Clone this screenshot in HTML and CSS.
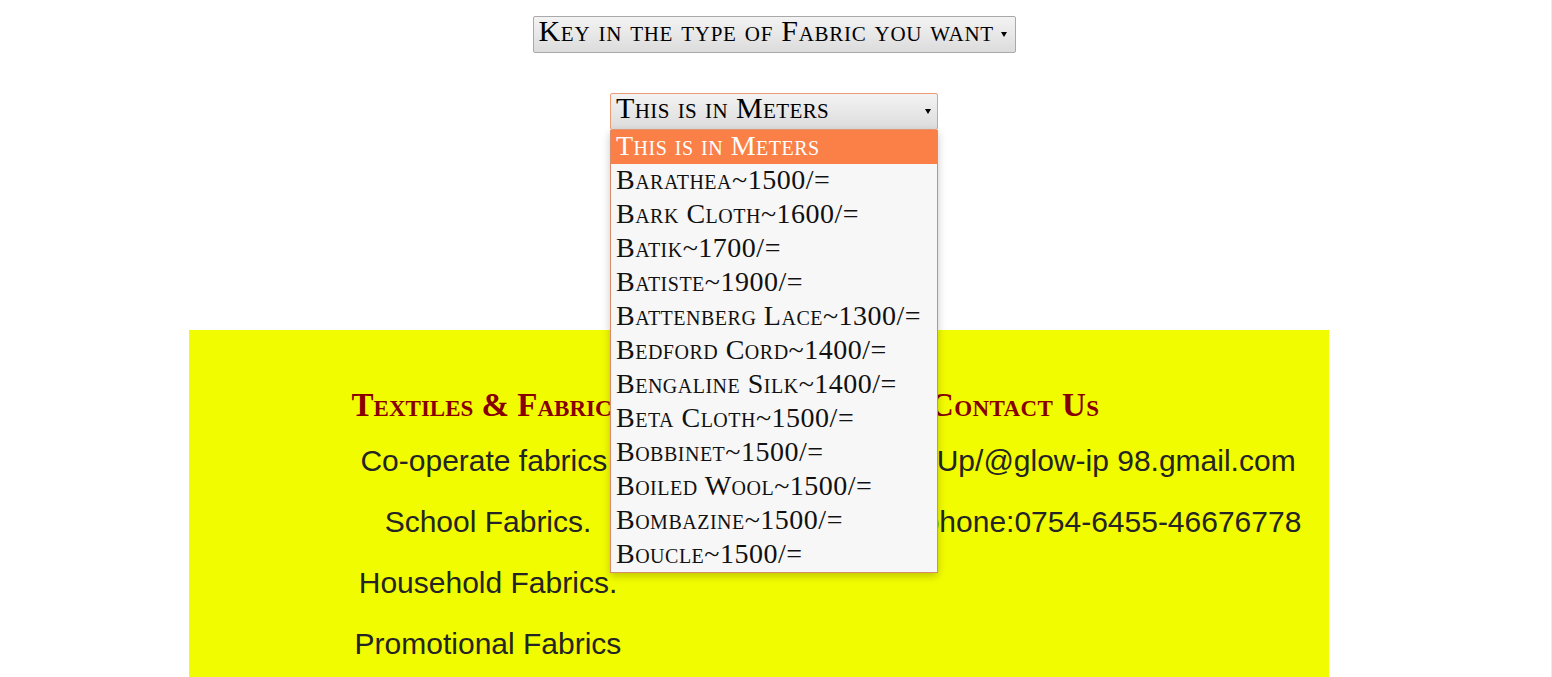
FILE: index.html
```html
<!DOCTYPE html>
<html lang="en">
<head>
<meta charset="utf-8">
<title>Fabrics</title>
<link rel="stylesheet" href="styles.css">
</head>
<body>
<div class="page">
  <div class="controls">
    <div class="select select-fabric">
      <span class="select-label">Key in the type of Fabric you want</span>
      <span class="caret"></span>
    </div>
    <div class="picker">
      <div class="select select-meters">
        <span class="select-label">This is in Meters</span>
        <span class="caret"></span>
      </div>
      <ul class="options">
        <li class="option is-active">This is in Meters</li>
        <li class="option">Barathea~1500/=</li>
        <li class="option">Bark Cloth~1600/=</li>
        <li class="option">Batik~1700/=</li>
        <li class="option">Batiste~1900/=</li>
        <li class="option">Battenberg Lace~1300/=</li>
        <li class="option">Bedford Cord~1400/=</li>
        <li class="option">Bengaline Silk~1400/=</li>
        <li class="option">Beta Cloth~1500/=</li>
        <li class="option">Bobbinet~1500/=</li>
        <li class="option">Boiled Wool~1500/=</li>
        <li class="option">Bombazine~1500/=</li>
        <li class="option">Boucle~1500/=</li>
      </ul>
    </div>
  </div>
  <footer class="footer">
    <div class="footer-col col-products">
      <h3 class="footer-title">Textiles &amp; Fabrics</h3>
      <p class="footer-line">Co-operate fabrics&nbsp;</p>
      <p class="footer-line">School Fabrics.</p>
      <p class="footer-line">Household Fabrics.</p>
      <p class="footer-line">Promotional Fabrics</p>
    </div>
    <div class="footer-col col-contact">
      <h3 class="footer-title contact-title">Contact Us</h3>
      <p class="footer-line">Mail:Up/@glow-ip 98.gmail.com</p>
      <p class="footer-line">Telephone:0754-6455-46676778</p>
    </div>
  </footer>
</div>
</body>
</html>
```
FILE: styles.css
```css
html, body {
  margin: 0;
  padding: 0;
  overflow: hidden;
}

body {
  background: #ffffff;
  font-family: "Liberation Serif", "Times New Roman", serif;
}

.page {
  width: 1551px;
  height: 677px;
  border-right: 1px solid #ebebeb;
}

.controls {
  display: flex;
  flex-direction: column;
  align-items: center;
  gap: 40px;
  padding-top: 16px;
  padding-right: 3px;
}

.select {
  box-sizing: border-box;
  height: 37px;
  display: flex;
  align-items: flex-start;
  border: 1px solid #a9a9a9;
  border-radius: 2px;
  background: linear-gradient(#f3f3f3, #dcdcdc);
  padding: 0 8px 0 5px;
  font-size: 30px;
  letter-spacing: 0.7px;
  font-variant: small-caps;
  color: #000000;
}

.select-fabric {
  width: 483px;
}

.select-meters {
  width: 328px;
  border-color: #ec9c74;
  padding-right: 6px;
  letter-spacing: 0.4px;
}

.select-label {
  flex: 1;
  line-height: 27px;
  white-space: nowrap;
}

.caret {
  align-self: center;
  width: 0;
  height: 0;
  border-left: 3.5px solid transparent;
  border-right: 3.5px solid transparent;
  border-top: 5px solid #000000;
}

.picker {
  position: relative;
  width: 328px;
}

.options {
  position: absolute;
  top: 100%;
  left: 0;
  right: 0;
  z-index: 2;
  margin: 0;
  padding: 0;
  list-style: none;
  background: #f7f7f7;
  border: 1px solid #d98c6c;
  border-top: 0;
  box-shadow: 0 3px 8px rgba(0, 0, 0, 0.22);
}

.option {
  height: 34px;
  line-height: 32px;
  padding-left: 5px;
  font-size: 28px;
  letter-spacing: 0.5px;
  font-variant: small-caps;
  color: #111111;
  white-space: nowrap;
}

.option.is-active {
  background: #fa8048;
  color: #ffffff;
}

.footer {
  box-sizing: border-box;
  margin: 200px 0 0 189px;
  width: 1140px;
  height: 347px;
  padding-top: 55px;
  background: #f2fc00;
  display: grid;
  grid-template-columns: 598px 542px;
}

.footer-col {
  text-align: center;
}

.col-contact {
  padding-left: 53px;
}

.footer-title {
  margin: 0 0 5px;
  height: 40px;
  line-height: 40px;
  font-size: 33px;
  font-weight: bold;
  font-variant: small-caps;
  color: #870000;
  white-space: nowrap;
}

.contact-title {
  text-align: left;
  padding-left: 90px;
  letter-spacing: 0.4px;
}

.footer-line {
  margin: 0;
  font-family: "Liberation Sans", Arial, sans-serif;
  font-size: 30px;
  line-height: 61px;
  color: #242424;
  white-space: nowrap;
}
```
